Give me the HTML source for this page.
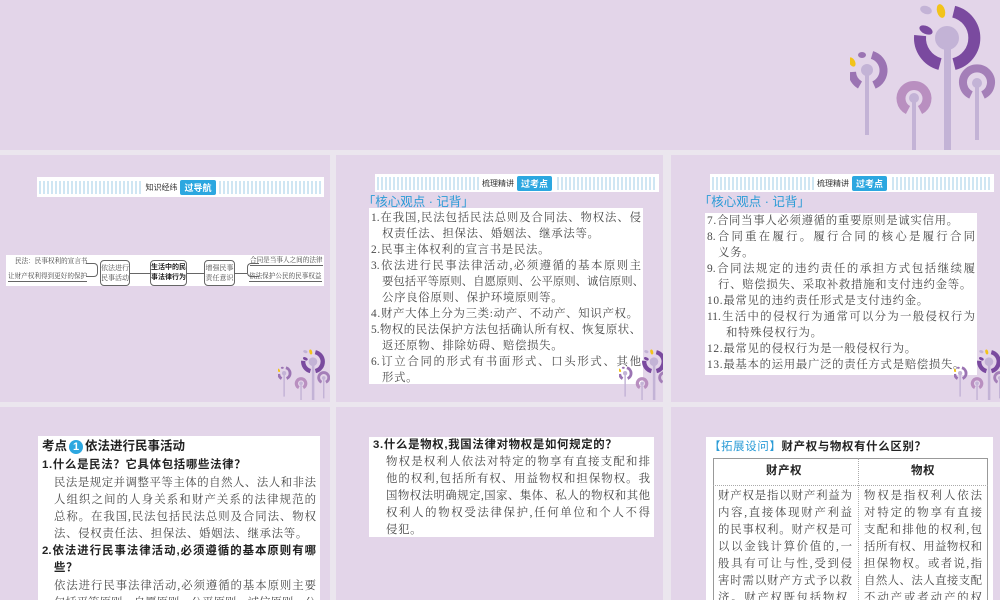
<!DOCTYPE html>
<html><head><meta charset="utf-8"><style>
*{margin:0;padding:0;box-sizing:border-box}
body{width:1000px;height:600px;overflow:hidden;background:#ebe6ee;position:relative;font-family:"Liberation Serif","Noto Serif CJK SC",serif;color:#4a4a4a}
.p{position:absolute;background:#e3d5e9;overflow:hidden}
.a{position:absolute}
.w{position:absolute;background:#fff}
.hdr{position:absolute;background:#fff;height:20px;display:flex;align-items:center;justify-content:center}
.hdr .s{position:absolute;left:2px;right:2px;top:4px;height:13px;background:repeating-linear-gradient(90deg,#cfe6f3 0 2px,#fff 2px 4px)}
.hdr .t{position:relative;background:#fff;font:8px "Liberation Sans","Noto Sans CJK SC",sans-serif;color:#333;padding:0 3px;display:flex;align-items:center}
.hdr .b{background:#2ca7e0;color:#fff;font-weight:bold;font-size:9px;padding:1px 4px;margin-left:3px;border-radius:2px}
.lbl{position:absolute;color:#2a9bd6;font:12.5px "Liberation Sans","Noto Sans CJK SC",sans-serif}
.ln{position:absolute;white-space:nowrap;font-size:11.4px;line-height:16px}
.ln:not(.j){letter-spacing:0.7px}
.j{text-align:justify;text-align-last:justify}
.bd{font-family:"Liberation Sans","Noto Sans CJK SC",sans-serif;font-weight:bold;color:#222}
.mm{position:absolute;font-size:6.6px;line-height:9px;color:#444;white-space:nowrap}
.bx{position:absolute;border:1px solid #666;border-radius:4px;font-size:7px;line-height:10px;text-align:center;background:#fff;white-space:nowrap;padding-top:2px}
</style></head><body>
<svg width="0" height="0" style="position:absolute"><defs>
<g id="fl">
<rect x="15" y="70" width="4" height="65" fill="#c3b3d6"/>
<rect x="62" y="98" width="4" height="52" fill="#c3b3d6"/>
<rect x="125" y="83" width="4" height="57" fill="#c3b3d6"/>
<rect x="94" y="38" width="7" height="112" fill="#c3b3d6"/>
<path d="M103.7 11.7 A27 27 0 0 1 104 64.1" stroke="#7a4a9f" stroke-width="12" fill="none"/>
<path d="M90 64.1 A27 27 0 0 1 70.1 35.6" stroke="#7a4a9f" stroke-width="12" fill="none"/>
<ellipse cx="76" cy="30" rx="7" ry="4" fill="#7a4a9f" transform="rotate(25 76 30)"/>
<ellipse cx="76" cy="10" rx="6" ry="4" fill="#c3b3d6" transform="rotate(20 76 10)"/>
<ellipse cx="91" cy="11" rx="4" ry="7" fill="#f2c31a" transform="rotate(-15 91 11)"/>
<circle cx="97" cy="38" r="12" fill="#c3b3d6"/>
<path d="M22 55 A16 16 0 0 1 24 85" stroke="#9b74b3" stroke-width="8" fill="none"/>
<path d="M10 85 A16 16 0 0 1 2 72" stroke="#9b74b3" stroke-width="8" fill="none"/>
<ellipse cx="12" cy="55" rx="4" ry="3" fill="#9b74b3"/>
<ellipse cx="2" cy="62" rx="3" ry="5" fill="#f2c31a" transform="rotate(-30 2 62)"/>
<circle cx="17" cy="70" r="6" fill="#c3b3d6"/>
<path d="M58 110 A13 13 0 1 1 70 110" stroke="#b98fc0" stroke-width="9" fill="none"/>
<circle cx="64" cy="98" r="5" fill="#c3b3d6"/>
<path d="M121 95 A14 14 0 1 1 133 95" stroke="#a47fb8" stroke-width="8" fill="none"/>
<circle cx="127" cy="83" r="5" fill="#c3b3d6"/>
</g></defs></svg>

<div class="p" style="left:0;top:0;width:1000px;height:150px">
<svg class="a" style="left:850px;top:0" width="150" height="150"><use href="#fl"/></svg>
</div>

<!-- row1 panel1 -->
<div class="p" style="left:0;top:155px;width:330px;height:247px">
<div class="hdr" style="left:37px;top:22px;width:287px"><div class="s"></div><div class="t">知识经纬<span class="b">过导航</span></div></div>
<div class="w" style="left:6px;top:100px;width:318px;height:31px"></div>
<div class="mm" style="left:15px;top:102px">民法：民事权利的宣言书</div>
<div class="mm" style="left:8px;top:117px;border-bottom:1px solid #666">让财产权利得到更好的保护</div>
<div class="a" style="left:86px;top:108px;width:12px;height:14px;border:1px solid #666;border-left:none;border-radius:0 4px 4px 0"></div>
<div class="bx" style="left:100px;top:105px;width:30px;height:26px">依法进行<br>民事活动</div>
<div class="a" style="left:130px;top:118px;width:20px;border-top:1px solid #666"></div>
<div class="bx bd" style="left:150px;top:105px;width:37px;height:26px">生活中的民<br>事法律行为</div>
<div class="a" style="left:187px;top:118px;width:17px;border-top:1px solid #666"></div>
<div class="bx" style="left:204px;top:105px;width:31px;height:26px">增强民事<br>责任意识</div>
<div class="a" style="left:235px;top:118px;width:12px;border-top:1px solid #666"></div>
<div class="a" style="left:247px;top:108px;width:12px;height:14px;border:1px solid #666;border-right:none;border-radius:4px 0 0 4px"></div>
<div class="mm" style="left:250px;top:101px;border-bottom:1px solid #666">合同是当事人之间的法律</div>
<div class="mm" style="left:249px;top:117px;border-bottom:1px solid #666">依法保护公民的民事权益</div>
<svg class="a" style="left:278px;top:193px" width="52" height="52"><use href="#fl" transform="scale(0.36)"/></svg>
</div>

<!-- row1 panel2 -->
<div class="p" style="left:336px;top:155px;width:327px;height:247px">
<div class="hdr" style="left:39px;top:19px;width:284px;height:18px"><div class="s" style="top:3px"></div><div class="t">梳理精讲<span class="b">过考点</span></div></div>
<div class="lbl" style="left:33px;top:36px">｢核心观点 · 记背｣</div>
<div class="w" style="left:33px;top:53px;width:274px;height:176px"></div>
<div class="ln j" style="left:35px;top:55px;width:270px">1.在我国,民法包括民法总则及合同法、物权法、侵</div>
<div class="ln" style="left:46px;top:71px">权责任法、担保法、婚姻法、继承法等。</div>
<div class="ln" style="left:35px;top:87px">2.民事主体权利的宣言书是民法。</div>
<div class="ln j" style="left:35px;top:103px;width:270px">3.依法进行民事法律活动,必须遵循的基本原则主</div>
<div class="ln j" style="left:46px;top:119px;width:259px">要包括平等原则、自愿原则、公平原则、诚信原则、</div>
<div class="ln" style="left:46px;top:135px">公序良俗原则、保护环境原则等。</div>
<div class="ln" style="left:35px;top:151px">4.财产大体上分为三类:动产、不动产、知识产权。</div>
<div class="ln j" style="left:35px;top:167px;width:270px">5.物权的民法保护方法包括确认所有权、恢复原状、</div>
<div class="ln" style="left:46px;top:183px">返还原物、排除妨碍、赔偿损失。</div>
<div class="ln j" style="left:35px;top:199px;width:270px">6.订立合同的形式有书面形式、口头形式、其他</div>
<div class="ln" style="left:46px;top:215px">形式。</div>
<svg class="a" style="left:283px;top:193px" width="52" height="52"><use href="#fl" transform="scale(0.36)"/></svg>
</div>

<!-- row1 panel3 -->
<div class="p" style="left:671px;top:155px;width:329px;height:247px">
<div class="hdr" style="left:39px;top:19px;width:284px;height:18px"><div class="s" style="top:3px"></div><div class="t">梳理精讲<span class="b">过考点</span></div></div>
<div class="lbl" style="left:34px;top:36px">｢核心观点 · 记背｣</div>
<div class="w" style="left:34px;top:58px;width:272px;height:162px"></div>
<div class="ln" style="left:36px;top:58px">7.合同当事人必须遵循的重要原则是诚实信用。</div>
<div class="ln j" style="left:36px;top:74px;width:268px">8.合同重在履行。履行合同的核心是履行合同</div>
<div class="ln" style="left:47px;top:90px">义务。</div>
<div class="ln j" style="left:36px;top:106px;width:268px">9.合同法规定的违约责任的承担方式包括继续履</div>
<div class="ln" style="left:47px;top:122px">行、赔偿损失、采取补救措施和支付违约金等。</div>
<div class="ln" style="left:36px;top:138px">10.最常见的违约责任形式是支付违约金。</div>
<div class="ln j" style="left:36px;top:154px;width:268px">11.生活中的侵权行为通常可以分为一般侵权行为</div>
<div class="ln" style="left:55px;top:170px">和特殊侵权行为。</div>
<div class="ln" style="left:36px;top:186px">12.最常见的侵权行为是一般侵权行为。</div>
<div class="ln" style="left:36px;top:202px">13.最基本的运用最广泛的责任方式是赔偿损失。</div>
<svg class="a" style="left:283px;top:193px" width="52" height="52"><use href="#fl" transform="scale(0.36)"/></svg>
</div>

<!-- row2 panel1 -->
<div class="p" style="left:0;top:407px;width:330px;height:193px">
<div class="w" style="left:38px;top:29px;width:282px;height:170px"></div>
<div class="ln bd" style="left:42px;top:31px;font-size:12.5px;line-height:17px;letter-spacing:0">考点<span style="display:inline-block;width:14px;height:14px;border-radius:7px;background:#2ca7e0;color:#fff;text-align:center;line-height:14px;font-size:11px;margin:0 2px">1</span>依法进行民事活动</div>
<div class="ln bd" style="left:42px;top:50px;line-height:17px">1.什么是民法？它具体包括哪些法律？</div>
<div class="ln j" style="left:54px;top:68px;width:262px;line-height:17px">民法是规定并调整平等主体的自然人、法人和非法</div>
<div class="ln j" style="left:54px;top:85px;width:262px;line-height:17px">人组织之间的人身关系和财产关系的法律规范的</div>
<div class="ln j" style="left:54px;top:102px;width:262px;line-height:17px">总称。在我国,民法包括民法总则及合同法、物权</div>
<div class="ln" style="left:54px;top:119px;line-height:17px">法、侵权责任法、担保法、婚姻法、继承法等。</div>
<div class="ln bd j" style="left:42px;top:136px;width:274px;line-height:17px">2.依法进行民事法律活动,必须遵循的基本原则有哪</div>
<div class="ln bd" style="left:54px;top:153px;line-height:17px">些？</div>
<div class="ln j" style="left:54px;top:171px;width:262px;line-height:17px">依法进行民事法律活动,必须遵循的基本原则主要</div>
<div class="ln j" style="left:54px;top:188px;width:262px;line-height:17px">包括平等原则、自愿原则、公平原则、诚信原则、公</div>
</div>

<!-- row2 panel2 -->
<div class="p" style="left:336px;top:407px;width:327px;height:193px">
<div class="w" style="left:33px;top:30px;width:285px;height:100px"></div>
<div class="ln bd" style="left:37px;top:30px;line-height:17px">3.什么是物权,我国法律对物权是如何规定的？</div>
<div class="ln j" style="left:50px;top:47px;width:264px;line-height:17px">物权是权利人依法对特定的物享有直接支配和排</div>
<div class="ln j" style="left:50px;top:64px;width:264px;line-height:17px">他的权利,包括所有权、用益物权和担保物权。我</div>
<div class="ln j" style="left:50px;top:81px;width:264px;line-height:17px">国物权法明确规定,国家、集体、私人的物权和其他</div>
<div class="ln j" style="left:50px;top:98px;width:264px;line-height:17px">权利人的物权受法律保护,任何单位和个人不得</div>
<div class="ln" style="left:50px;top:115px;line-height:17px">侵犯。</div>
</div>

<!-- row2 panel3 -->
<div class="p" style="left:671px;top:407px;width:329px;height:193px">
<div class="w" style="left:35px;top:30px;width:287px;height:170px"></div>
<div class="ln" style="left:38px;top:32px;line-height:16px"><span style="color:#2a9bd6;font-family:'Liberation Sans','Noto Sans CJK SC',sans-serif">【拓展设问】</span><span class="bd">财产权与物权有什么区别？</span></div>
<div class="a" style="left:42px;top:51px;width:275px;height:150px;border:1px solid #999"></div>
<div class="a" style="left:187px;top:51px;height:150px;border-left:1px dotted #aaa"></div>
<div class="a" style="left:42px;top:78px;width:275px;border-top:1px dotted #aaa"></div>
<div class="ln bd" style="left:95px;top:56px">财产权</div>
<div class="ln bd" style="left:240px;top:56px">物权</div>
<div class="ln j" style="left:47px;top:81px;width:134px;line-height:17px">财产权是指以财产利益为</div>
<div class="ln j" style="left:47px;top:98px;width:134px;line-height:17px">内容,直接体现财产利益</div>
<div class="ln j" style="left:47px;top:115px;width:134px;line-height:17px">的民事权利。财产权是可</div>
<div class="ln j" style="left:47px;top:132px;width:134px;line-height:17px">以以金钱计算价值的,一</div>
<div class="ln j" style="left:47px;top:149px;width:134px;line-height:17px">般具有可让与性,受到侵</div>
<div class="ln j" style="left:47px;top:166px;width:134px;line-height:17px">害时需以财产方式予以救</div>
<div class="ln j" style="left:47px;top:183px;width:134px;line-height:17px">济。财产权既包括物权,</div>
<div class="ln j" style="left:193px;top:81px;width:118px;line-height:17px">物权是指权利人依法</div>
<div class="ln j" style="left:193px;top:98px;width:118px;line-height:17px">对特定的物享有直接</div>
<div class="ln j" style="left:193px;top:115px;width:118px;line-height:17px">支配和排他的权利,包</div>
<div class="ln j" style="left:193px;top:132px;width:118px;line-height:17px">括所有权、用益物权和</div>
<div class="ln j" style="left:193px;top:149px;width:118px;line-height:17px">担保物权。或者说,指</div>
<div class="ln j" style="left:193px;top:166px;width:118px;line-height:17px">自然人、法人直接支配</div>
<div class="ln j" style="left:193px;top:183px;width:118px;line-height:17px">不动产或者动产的权</div>
</div>
</body></html>
